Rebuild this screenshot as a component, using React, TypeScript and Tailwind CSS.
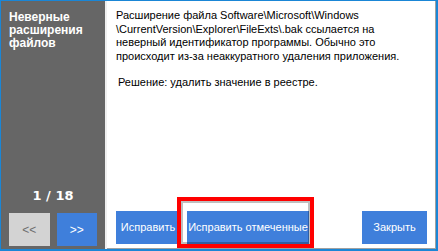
import React from "react";

export default function App() {
  const font = { fontFamily: '"Liberation Sans", Arial, sans-serif' };
  return (
    <div className="relative w-[438px] h-[251px] bg-white border-t border-l border-r-2 border-b-2 border-[#1a86d6] flex overflow-hidden" style={font}>
      <div className="w-[104px] bg-[#666666] flex flex-col px-[8px] pt-[10px] pb-[3px] shrink-0">
        <div className="text-white font-bold text-[12px] leading-[13px]">
          Неверные<br />расширения<br />файлов
        </div>
        <div className="flex-1" />
        <div className="text-white font-bold text-[13px] text-center leading-[16px] mb-[9px]" style={{ fontFamily: '"DejaVu Sans", sans-serif' }}>1 / 18</div>
        <div className="flex gap-[7px] h-[33px]">
          <div className="w-[41px] bg-[#d3d3d3] text-[#6e6e6e] text-[12px] flex items-center justify-center">&lt;&lt;</div>
          <div className="w-[41px] bg-[#3f7fdb] text-white text-[12px] flex items-center justify-center">&gt;&gt;</div>
        </div>
      </div>
      <div className="w-[2px] bg-[#f0f0f0] shrink-0" />
      <div className="flex-1 flex flex-col border-r border-b border-[#a0a0a0] pl-[9px] pr-[4px] pt-[8px] pb-[4px] text-[11px] leading-[13.5px] text-black whitespace-nowrap">
        <div>
          Расширение файла Software\Microsoft\Windows<br />
          \CurrentVersion\Explorer\FileExts\.bak ссылается на<br />
          неверный идентификатор программы. Обычно это<br />
          происходит из-за неаккуратного удаления приложения.
        </div>
        <div className="mt-[13px] pl-[2px]">Решение: удалить значение в реестре.</div>
        <div className="flex-1" />
        <div className="flex h-[33px] items-stretch pr-[4px] text-[11px]">
          <div className="w-[64px] bg-[#3f7fdb] text-white flex items-center justify-center">Исправить</div>
          <div className="w-[122px] ml-[7px] bg-[#3f7fdb] text-white flex items-center justify-center">Исправить отмеченные</div>
          <div className="flex-1" />
          <div className="w-[65px] bg-[#3f7fdb] text-white flex items-center justify-center">Закрыть</div>
        </div>
      </div>
      <div className="absolute left-[176px] top-[196px] w-[137px] h-[51px] border-[4px] border-[#ff0000] shadow-[inset_0_0_0_2px_rgba(0,0,0,0.25)]" />
    </div>
  );
}
